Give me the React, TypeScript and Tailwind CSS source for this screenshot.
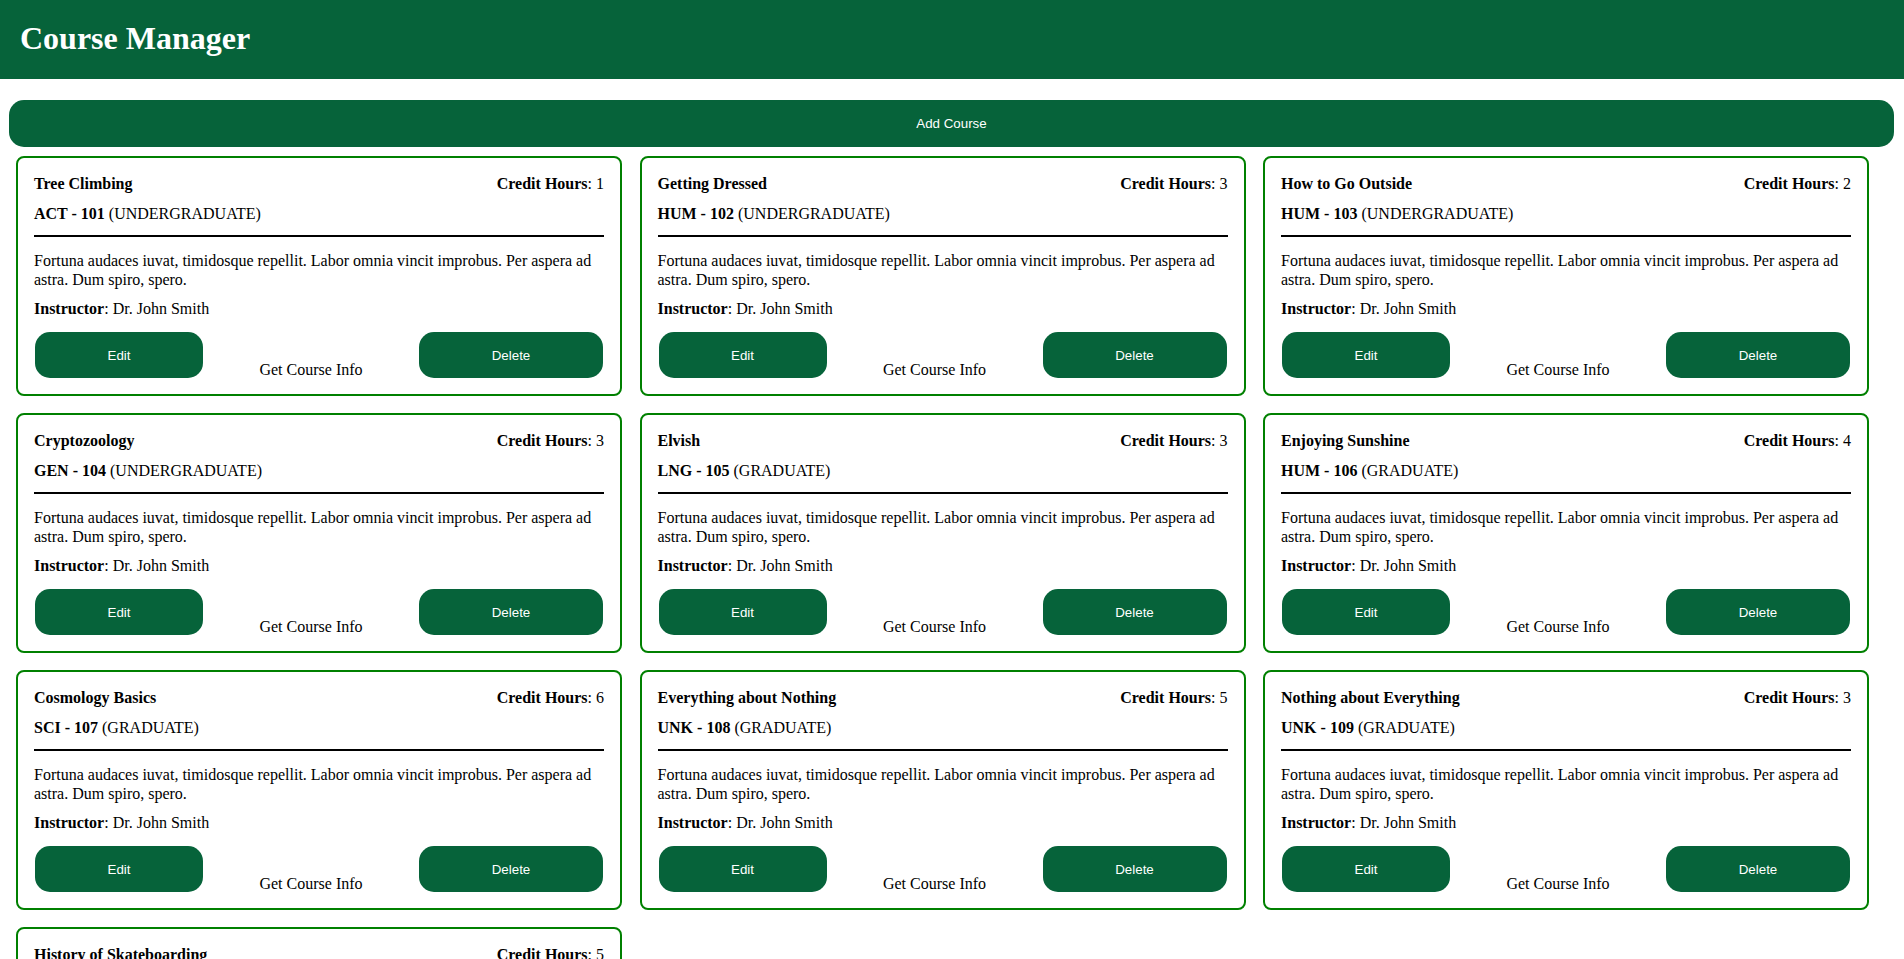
import React from "react";

type Course = {
  name: string;
  hours: number;
  dept: string;
  num: number;
  level: string;
};

const courses: Course[] = [
  { name: "Tree Climbing", hours: 1, dept: "ACT", num: 101, level: "UNDERGRADUATE" },
  { name: "Getting Dressed", hours: 3, dept: "HUM", num: 102, level: "UNDERGRADUATE" },
  { name: "How to Go Outside", hours: 2, dept: "HUM", num: 103, level: "UNDERGRADUATE" },
  { name: "Cryptozoology", hours: 3, dept: "GEN", num: 104, level: "UNDERGRADUATE" },
  { name: "Elvish", hours: 3, dept: "LNG", num: 105, level: "GRADUATE" },
  { name: "Enjoying Sunshine", hours: 4, dept: "HUM", num: 106, level: "GRADUATE" },
  { name: "Cosmology Basics", hours: 6, dept: "SCI", num: 107, level: "GRADUATE" },
  { name: "Everything about Nothing", hours: 5, dept: "UNK", num: 108, level: "GRADUATE" },
  { name: "Nothing about Everything", hours: 3, dept: "UNK", num: 109, level: "GRADUATE" },
  { name: "History of Skateboarding", hours: 5, dept: "HIS", num: 110, level: "GRADUATE" },
];

function CourseCard({ c }: { c: Course }) {
  return (
    <div className="w-[606px] border-2 border-[#008000] rounded-[8px] px-[16px] pt-[17px] pb-[16px] flex flex-col text-[16px] leading-[18.4px]">
      <div className="flex justify-between">
        <span className="font-bold">{c.name}</span>
        <span>
          <span className="font-bold">Credit Hours</span>: {c.hours}
        </span>
      </div>
      <div className="mt-[11.5px]">
        <span className="font-bold">
          {c.dept} - {c.num}
        </span>{" "}
        ({c.level})
      </div>
      <div className="mt-[11.5px] h-[2px] bg-black" />
      <p className="mt-[15.5px]">
        Fortuna audaces iuvat, timidosque repellit. Labor omnia vincit improbus. Per aspera ad astra. Dum spiro, spero.
      </p>
      <div className="mt-[10.5px]">
        <span className="font-bold">Instructor</span>: Dr. John Smith
      </div>
      <div className="mt-[14px] flex justify-between items-end">
        <button className="ml-[1px] w-[168px] h-[46px] rounded-[15px] bg-[#06633a] text-white font-['Liberation_Sans',Arial,sans-serif] text-[13.33px] leading-[15px]">
          Edit
        </button>
        <span className="leading-[18.4px] translate-y-[1px]">Get Course Info</span>
        <button className="mr-[1px] w-[184px] h-[46px] rounded-[15px] bg-[#06633a] text-white font-['Liberation_Sans',Arial,sans-serif] text-[13.33px] leading-[15px]">
          Delete
        </button>
      </div>
    </div>
  );
}

export default function App() {
  return (
    <div className="min-h-screen bg-white text-black font-['Liberation_Serif','Times_New_Roman',serif]">
      <header className="h-[79px] bg-[#06633a] pl-[20px] pt-[20px]">
        <h1 className="text-[32px] leading-[36.8px] font-bold text-white">Course Manager</h1>
      </header>
      <div className="pl-[9px] pt-[21px]">
        <button className="w-[1885px] h-[47px] rounded-[15px] bg-[#06633a] text-white font-['Liberation_Sans',Arial,sans-serif] text-[13.33px] leading-[15px]">
          Add Course
        </button>
      </div>
      <div className="pl-[16px] pt-[9px] pb-[20px] grid grid-cols-[repeat(3,606px)] gap-x-[17.5px] gap-y-[17px]">
        {courses.map((c) => (
          <CourseCard key={c.num} c={c} />
        ))}
      </div>
    </div>
  );
}
